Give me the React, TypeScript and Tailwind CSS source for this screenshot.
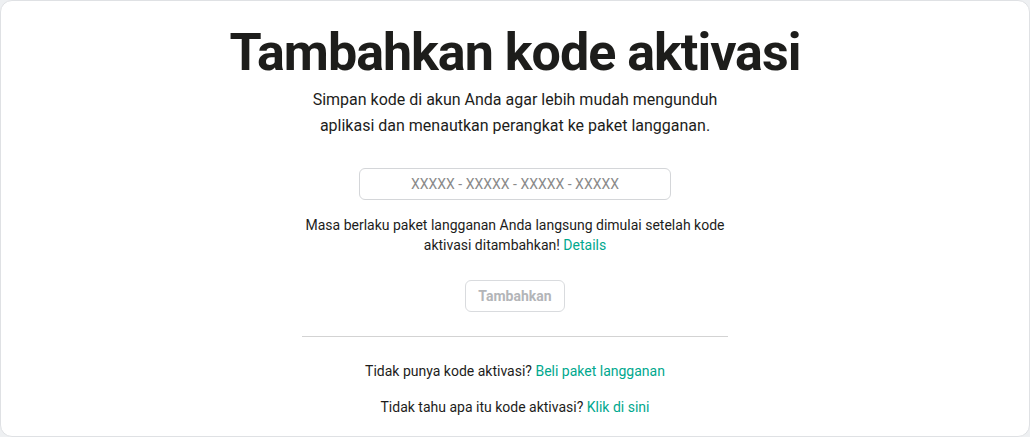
import React from "react";

const App = () => {
  return (
    <div className="min-h-screen bg-[#eef0f2] font-['Roboto',sans-serif] text-[#1d1d1b]">
      <div className="h-[437px] rounded-xl border border-[#dfe1e4] bg-white">
        <div className="flex flex-col items-center pt-[22px]">
          <h1 className="text-[52px] font-bold leading-[60px] tracking-[-1px]">Tambahkan kode aktivasi</h1>
          <p className="mt-[4px] max-w-[420px] text-center text-[16px] leading-[26px]">
            Simpan kode di akun Anda agar lebih mudah mengunduh aplikasi dan menautkan perangkat ke paket langganan.
          </p>

          <input
            type="text"
            placeholder="XXXXX - XXXXX - XXXXX - XXXXX"
            className="mt-[29px] h-[32px] w-[312px] rounded-md border border-[#d4d6d9] text-center text-[14px] placeholder:text-[#8a8a8a] outline-none"
          />

          <div className="mt-[15px] text-center text-[14px] leading-[20px]">
            <p>Masa berlaku paket langganan Anda langsung dimulai setelah kode</p>
            <p>
              aktivasi ditambahkan! <a href="#" className="text-[#00a88e]">Details</a>
            </p>
          </div>

          <button className="mt-[25px] h-[32px] rounded-md border border-[#d9dbde] px-[12px] text-[14px] font-bold text-[#b3b5b8]">
            Tambahkan
          </button>

          <div className="mt-[24px] h-px w-[426px] bg-[#d3d3d3]" />

          <p className="mt-[24px] text-[14px] leading-[20px]">
            Tidak punya kode aktivasi? <a href="#" className="text-[#00a88e]">Beli paket langganan</a>
          </p>
          <p className="mt-[16px] text-[14px] leading-[20px]">
            Tidak tahu apa itu kode aktivasi? <a href="#" className="text-[#00a88e]">Klik di sini</a>
          </p>
        </div>
      </div>
    </div>
  );
};

export default App;
